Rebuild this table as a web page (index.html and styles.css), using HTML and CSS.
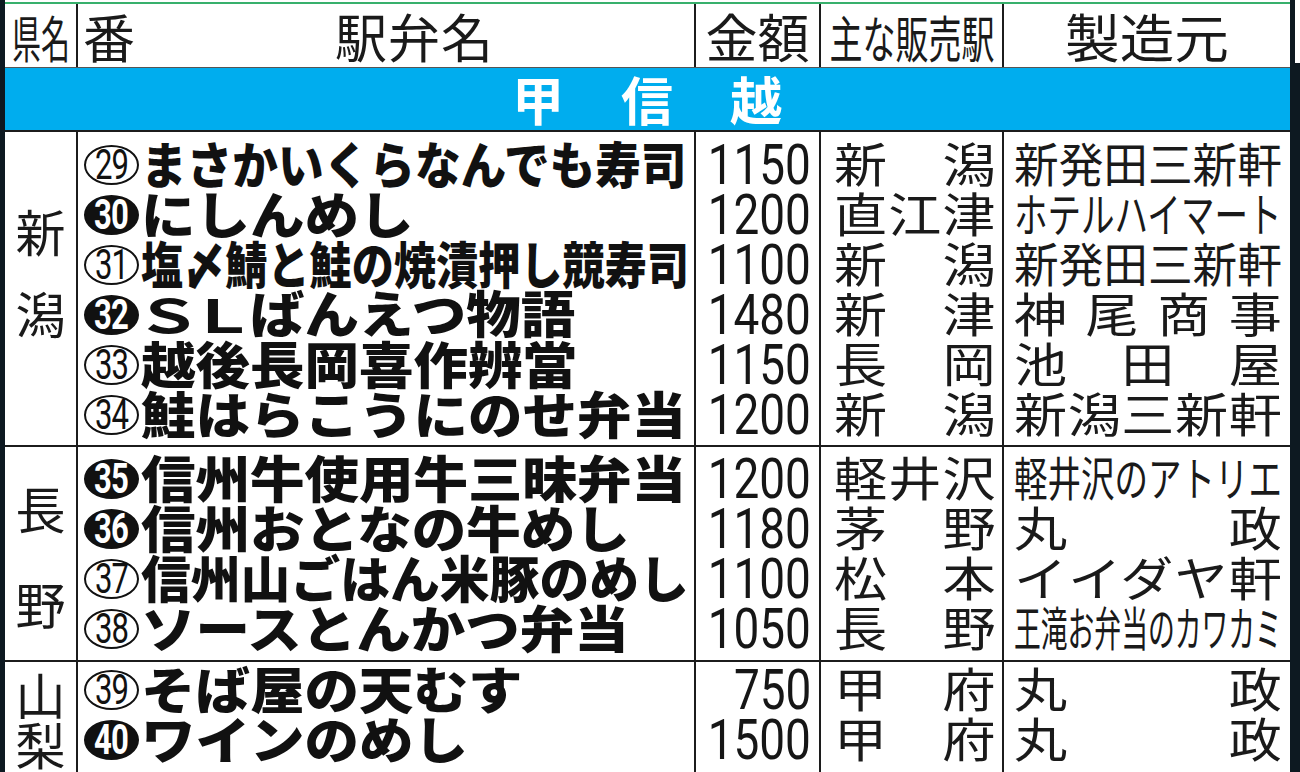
FILE: index.html
```html
<!DOCTYPE html>
<html lang="ja">
<head>
<meta charset="utf-8">
<title>甲信越 駅弁</title>
<link rel="stylesheet" href="styles.css">
</head>
<body>
<div class="page">
  <div class="lstrip"></div>
  <div class="main">
    <div class="topline"></div>
    <div class="head grid">
      <div class="hc"><span class="h-pref">県名</span></div>
      <div class="hc hc-name"><span class="h-ban">番</span><span class="h-name">駅弁名</span></div>
      <div class="hc">金額</div>
      <div class="hc"><span class="h-st">主な販売駅</span></div>
      <div class="hc"><span class="h-mk">製造元</span></div>
    </div>
    <div class="band">甲信越</div>

    <div class="group g1 grid">
      <div class="pref"><span>新</span><span>潟</span></div>
      <div class="col names">
        <div class="ln"><span class="num"><span>29</span></span><span class="nm s91">まさかいくらなんでも寿司</span></div>
        <div class="ln"><span class="num f"><span>30</span></span><span class="nm">にしんめし</span></div>
        <div class="ln"><span class="num"><span>31</span></span><span class="nm s84">塩〆鯖と鮭の焼漬押し競寿司</span></div>
        <div class="ln"><span class="num f"><span>32</span></span><span class="nm"><span class="wl">Ｓ</span><span class="wl">Ｌ</span>ばんえつ物語</span></div>
        <div class="ln"><span class="num"><span>33</span></span><span class="nm">越後長岡喜作辨當</span></div>
        <div class="ln"><span class="num"><span>34</span></span><span class="nm">鮭はらこうにのせ弁当</span></div>
      </div>
      <div class="col prices">
        <div class="ln"><span class="pr">1150</span></div>
        <div class="ln"><span class="pr">1200</span></div>
        <div class="ln"><span class="pr">1100</span></div>
        <div class="ln"><span class="pr">1480</span></div>
        <div class="ln"><span class="pr">1150</span></div>
        <div class="ln"><span class="pr">1200</span></div>
      </div>
      <div class="col stations">
        <div class="ln">新潟</div>
        <div class="ln">直江津</div>
        <div class="ln">新潟</div>
        <div class="ln">新津</div>
        <div class="ln">長岡</div>
        <div class="ln">新潟</div>
      </div>
      <div class="col makers">
        <div class="ln"><span class="fit f95">新発田三新軒</span></div>
        <div class="ln"><span class="fit f71">ホテルハイマート</span></div>
        <div class="ln"><span class="fit f95">新発田三新軒</span></div>
        <div class="ln wide">神尾商事</div>
        <div class="ln wide">池田屋</div>
        <div class="ln wide">新潟三新軒</div>
      </div>
    </div>

    <div class="group g2 grid">
      <div class="pref"><span>長</span><span>野</span></div>
      <div class="col names">
        <div class="ln"><span class="num f"><span>35</span></span><span class="nm">信州牛使用牛三昧弁当</span></div>
        <div class="ln"><span class="num f"><span>36</span></span><span class="nm">信州おとなの牛めし</span></div>
        <div class="ln"><span class="num"><span>37</span></span><span class="nm s99">信州山ごはん米豚のめし</span></div>
        <div class="ln"><span class="num"><span>38</span></span><span class="nm">ソースとんかつ弁当</span></div>
      </div>
      <div class="col prices">
        <div class="ln"><span class="pr">1200</span></div>
        <div class="ln"><span class="pr">1180</span></div>
        <div class="ln"><span class="pr">1100</span></div>
        <div class="ln"><span class="pr">1050</span></div>
      </div>
      <div class="col stations">
        <div class="ln">軽井沢</div>
        <div class="ln">茅野</div>
        <div class="ln">松本</div>
        <div class="ln">長野</div>
      </div>
      <div class="col makers">
        <div class="ln"><span class="fit f71">軽井沢のアトリエ</span></div>
        <div class="ln wide">丸政</div>
        <div class="ln wide">イイダヤ軒</div>
        <div class="ln"><span class="fit f57">王滝お弁当のカワカミ</span></div>
      </div>
    </div>

    <div class="group g3 grid">
      <div class="pref"><span>山</span><span>梨</span></div>
      <div class="col names">
        <div class="ln"><span class="num"><span>39</span></span><span class="nm">そば屋の天むす</span></div>
        <div class="ln"><span class="num f"><span>40</span></span><span class="nm">ワインのめし</span></div>
      </div>
      <div class="col prices">
        <div class="ln"><span class="pr">750</span></div>
        <div class="ln"><span class="pr">1500</span></div>
      </div>
      <div class="col stations">
        <div class="ln">甲府</div>
        <div class="ln">甲府</div>
      </div>
      <div class="col makers">
        <div class="ln wide">丸政</div>
        <div class="ln wide">丸政</div>
      </div>
    </div>
  </div>
  <div class="rstrip"><div class="rtop"></div></div>
</div>
</body>
</html>
```
FILE: styles.css
```css
* { box-sizing: border-box; margin: 0; padding: 0; }
body {
  margin: 0;
  background: #fff;
  color: #161616;
  font-family: "Noto Sans CJK JP", "Noto Sans", sans-serif;
  overflow: hidden;
}
.page { display: flex; width: 1300px; height: 772px; overflow: hidden; }
.lstrip { width: 5px; flex: none; background: #0d1921; }
.rstrip { width: 10px; flex: none; background: #0d1921; }
.rtop { height: 63px; margin-left: 5px; background: #fff; }
.main { width: 1285px; flex: none; }
.topline { height: 2px; margin-top: 2px; background: #38b06c; }

.grid {
  display: grid;
  grid-template-columns: 71px 616px 123px 181px 286px;
  column-gap: 2px;
  background: #1c1c1c;
}
.grid > div { background: #fff; }

/* header */
.head { height: 64px; border-bottom: 1px solid #555; }
.hc {
  display: flex; align-items: center; justify-content: center;
  font-size: 52px; line-height: 60px; font-weight: 400; color: #1a1a1a;
  white-space: nowrap;
}
.h-pref { display: inline-block; flex: none; font-size: 50px; transform: scaleX(0.58); }
.hc-name { justify-content: flex-start; padding-left: 5px; }
.h-name { flex: 1; text-align: center; letter-spacing: 1px; }
.h-st { display: inline-block; flex: none; font-size: 50px; transform: scaleX(0.66); }
.h-mk { display: inline-block; flex: none; transform: scaleX(1.05); }

/* band */
.band {
  height: 64px;
  background: #00adee;
  border-bottom: 2px solid #1c1c1c;
  color: #fff;
  font-weight: 700;
  font-size: 52px;
  line-height: 62px;
  letter-spacing: 57px;
  text-align: center;
  padding-left: 56px;
}

/* groups */
.group { border-bottom: 2px solid #1c1c1c; }
.pref {
  display: flex; flex-direction: column; align-items: center;
  font-size: 50px; line-height: 50px; color: #1a1a1a;
}
.g1 .pref { padding-top: 73px; gap: 32px; }
.g2 .pref { padding-top: 35px; gap: 46px; }
.g3 .pref { padding-top: 6px; gap: 0; }

.col { display: flex; flex-direction: column; }
.g1 .col { padding-top: 8px; padding-bottom: 5px; }
.g2 .col { padding-top: 7px; padding-bottom: 6px; }
.g3 .col { padding-top: 3px; padding-bottom: 7px; }

.ln { height: 50px; white-space: nowrap; flex: none; }

/* names */
.names .ln { display: flex; align-items: center; padding-left: 6px; }
.num {
  flex: none;
  width: 55px; height: 40px;
  border: 2px solid #111;
  border-radius: 50%;
  display: flex; align-items: center; justify-content: center;
  font-family: Roboto, "Liberation Sans", sans-serif;
  font-size: 42px; line-height: 1; font-weight: 400;
  color: #111; background: #fff;
}
.num span { display: inline-block; transform: scaleX(0.74); letter-spacing: -1px; }
.num.f { background: #111; color: #fff; font-weight: 700; }
.nm {
  display: inline-block; flex: none;
  margin-left: 2px; margin-top: -6px;
  font-size: 50px; line-height: 50px; font-weight: 900; color: #111;
  transform-origin: left center;
  transform: scaleX(1.09);
}
.nm.s91 { transform: scaleX(0.913); }
.nm.s84 { transform: scaleX(0.843); }
.nm.s99 { transform: scaleX(0.996); }
.wl {
  display: inline-block;
  width: 50px;
  font-size: 46px;
  font-weight: 700;
  text-align: center;
  transform: scaleX(1.35);
}

/* prices */
.prices .ln { display: flex; justify-content: flex-end; padding-right: 8px; }
.pr {
  display: inline-block;
  font-family: Roboto, "Liberation Sans", sans-serif;
  font-size: 56px; line-height: 50px; font-weight: 400; color: #161616;
  transform-origin: right center;
  transform: scaleX(0.82);
}

/* stations */
.stations .ln {
  width: 143px; margin-left: 13px;
  font-size: 47px; line-height: 44px; color: #1a1a1a;
  text-align: justify; text-align-last: justify;
  transform-origin: left center;
  transform: scaleX(1.13);
}

/* makers */
.makers .ln {
  width: 268px; margin-left: 10px;
  font-size: 47px; line-height: 44px; color: #1a1a1a;
  text-align: justify; text-align-last: justify;
}
.makers .ln.wide {
  width: 237px;
  transform-origin: left center;
  transform: scaleX(1.13);
}
.fit { display: inline-block; transform-origin: left center; }
.fit.f95 { transform: scaleX(0.95); }
.fit.f71 { transform: scaleX(0.713); }
.fit.f57 { transform: scaleX(0.57); }
```
